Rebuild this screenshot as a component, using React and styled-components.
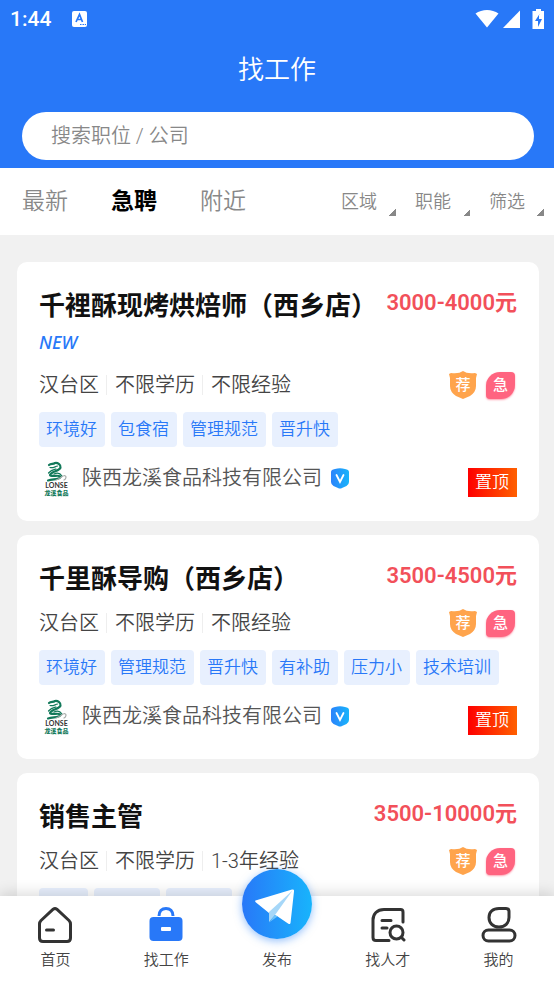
import React, { useState } from 'react';
import styled, { createGlobalStyle } from 'styled-components'

const jobs = [
    {
        id: 1,
        title: '千裡酥现烤烘焙师（西乡店）',
        salary: '3000-4000元',
        isNew: true,
        meta: ['汉台区', '不限学历', '不限经验'],
        tags: ['环境好', '包食宿', '管理规范', '晋升快'],
        company: '陕西龙溪食品科技有限公司',
    },
    {
        id: 2,
        title: '千里酥导购（西乡店）',
        salary: '3500-4500元',
        meta: ['汉台区', '不限学历', '不限经验'],
        tags: ['环境好', '管理规范', '晋升快', '有补助', '压力小', '技术培训'],
        company: '陕西龙溪食品科技有限公司',
    },
    {
        id: 3,
        title: '销售主管',
        salary: '3500-10000元',
        meta: ['汉台区', '不限学历', '1-3年经验'],
        tags: ['五险', '环境好', '晋升快'],
    },
]

const tabs = ['最新', '急聘', '附近']
const filters = ['区域', '职能', '筛选']

const StatusIcons = () => (
    <svg width="72" height="22" viewBox="0 0 72 22" fill="#fff" aria-hidden="true">
        <path d="M0.5 5.5C7 0.7 17 0.7 23.5 5.5L12 19.5Z" />
        <path d="M45 2.5V20H28Z" />
        <path fillRule="evenodd" d="M61 1h5v2h3v18H57.500V3H61ZM64.500 6L60 13h3v6l4-8h-3V6Z" />
    </svg>
)

const KeyboardIcon = () => (
    <svg width="15" height="16" viewBox="0 0 15 16" aria-hidden="true">
        <rect width="15" height="16" rx="2" fill="#fff" />
        <path d="M4 11L7.500 3.500L10.500 11M5.200 8.500H9.600" fill="none" stroke="#2878f8" strokeWidth="1.700" />
        <path d="M8 13.500h1.500m1 0H12m.8 0h1.200" stroke="#2878f8" strokeWidth="1.200" />
    </svg>
)

const CompanyLogo = () => (
    <svg width="34" height="36" viewBox="0 2 34 36" role="img" aria-label="LONSE">
        <g fill="none" strokeLinecap="round" strokeLinejoin="round">
            <path d="M10 6C12 4 14 5.500 16 4C19 3.500 22 6 21.500 8.500C21 12 12 12.500 11 16C12 18.500 21 15 21.500 18C21 20.500 14 20 9 21.500" stroke="#12795a" strokeWidth="2.200" />
            <path d="M11 8.500C14 9.500 16 7.500 18.500 7M9.500 14C12 11 15 10.500 17 10M15 15C18 13.500 21 14 23 17" stroke="#12795a" strokeWidth="1.200" />
            <path d="M17 21C20 20.500 23 17 25.500 16.500C28 17 27 20 25 21" stroke="#a9adab" strokeWidth="1.200" />
        </g>
        <text x="17.500" y="29" textAnchor="middle" fontFamily="Lato, sans-serif" fontSize="7" fontWeight="700" fill="#333">LONSE</text>
        <text x="17.500" y="36" textAnchor="middle" fontFamily="'Noto Sans CJK SC', sans-serif" fontSize="6" fontWeight="900" fill="#12795a">龙溪食品</text>
    </svg>
)

const VerifiedIcon = () => (
    <svg width="18" height="21" viewBox="0 0 18 21" role="img" aria-label="已认证">
        <defs>
            <linearGradient id="verified">
                <stop offset="0" stopColor="#2b83fb" />
                <stop offset="1" stopColor="#18b4fb" />
            </linearGradient>
        </defs>
        <path d="M4 1Q9-.5 14 1Q18 1.500 18 4V14Q18 16.500 15.500 18L11 20Q9 21 7 20L2.500 18Q0 16.500 0 14V4Q0 1.500 4 1Z" fill="url(#verified)" />
        <path d="M5.500 7L9 14L12.500 7" fill="none" stroke="#fff" strokeWidth="1.800" strokeLinecap="round" />
    </svg>
)

const ShieldShape = () => (
    <svg width="30" height="30" viewBox="0 0 30 30" aria-hidden="true">
        <path d="M15 1Q19 4 27 3L29 4L28 8V16Q28 22 22 26L15 29L8 26Q2 22 2 16V8L1 4L3 3Q11 4 15 1Z" fill="#ffa44c" />
    </svg>
)

const HomeIcon = () => (
    <svg width="36" height="38" viewBox="0 0 36 38" fill="none" stroke="#333" strokeWidth="3" strokeLinecap="round" strokeLinejoin="round">
        <path d="M16.200 3.200Q18 1.800 19.800 3.200L32 14.500Q33.500 16 33.500 18V32Q33.500 35.500 30 35.500H6Q2.500 35.500 2.500 32V18Q2.500 16 4 14.500Z" />
        <path d="M9.500 24h7" />
    </svg>
)

const WorkIcon = () => (
    <svg width="36" height="38" viewBox="0 0 36 38">
        <path d="M11 10C11 5 14 2.500 18 2.500S25 5 25 10" fill="none" stroke="#2878f8" strokeWidth="3" />
        <rect x="1.500" y="11" width="33" height="24" rx="4" fill="#2878f8" />
        <rect x="13" y="21" width="10" height="4" rx="1" fill="#fff" />
    </svg>
)

const PlaneIcon = () => (
    <svg width="44" height="40" viewBox="0 0 44 40">
        <path d="M0.500 16.500L37 5.500Q39.500 5 39 7.500L35.500 39Q35 41 33 39.500L22 32L14 29L1 18.500Q-.5 17 .5 16.500Z" fill="#fff" />
        <path d="M14 28L37.500 6.500L20 31L14 38Z" fill="#a6d7f8" />
        <path d="M20 31L22.500 32.500L14 38.500Z" fill="#6ec3f8" />
    </svg>
)

const TalentIcon = () => (
    <svg width="36" height="38" viewBox="0 0 36 38" fill="none" stroke="#333" strokeWidth="3" strokeLinecap="round" strokeLinejoin="round">
        <path d="M33 16V6Q33 3.500 30.500 3.500H14C7 3.500 3 8 3 14V31.500Q3 34.500 6 34.500H19" />
        <path d="M12 14.500h9M12 22h5M31.500 31.500L34 34" />
        <circle cx="26.500" cy="26.500" r="6.500" />
    </svg>
)

const MineIcon = () => (
    <svg width="36" height="38" viewBox="0 0 36 38" fill="none" stroke="#333" strokeWidth="3" strokeLinejoin="round">
        <path d="M18 2.500H25Q28 2.500 28 5.500V11.500C28 17 24 21 18 21S8 17 8 11.500S12 2.500 18 2.500Z" />
        <rect x="2" y="24" width="32" height="11" rx="5.500" />
    </svg>
)

const navItems = [
    { label: '首页', Icon: HomeIcon },
    { label: '找工作', Icon: WorkIcon },
    { label: '发布', Icon: PlaneIcon, main: true },
    { label: '找人才', Icon: TalentIcon },
    { label: '我的', Icon: MineIcon },
]

const JobCard = ({ job }) => (
    <Card>
        <TitleRow>
            <JobTitle>{job.title}</JobTitle>
            <Salary>{job.salary}</Salary>
        </TitleRow>
        {job.isNew && <NewMark>NEW</NewMark>}
        <MetaRow>
            {job.meta.map((item) => (
                <MetaItem key={item}>{item}</MetaItem>
            ))}
            <Badges>
                <Shield>
                    <ShieldShape />
                    <span>荐</span>
                </Shield>
                <Urgent>急</Urgent>
            </Badges>
        </MetaRow>
        <Tags>
            {job.tags.map((tag) => (
                <Tag key={tag}>{tag}</Tag>
            ))}
        </Tags>
        {job.company && (
            <CompanyRow>
                <CompanyLogo />
                <CompanyName>{job.company}</CompanyName>
                <VerifiedIcon />
                <TopMark>置顶</TopMark>
            </CompanyRow>
        )}
    </Card>
)

const App = () => {

    const [tab, setTab] = useState('急聘')
    const [keyword, setKeyword] = useState('')

    return (
        <Page>
            <GlobalStyle />
            <Header>
                <StatusBar>
                    <Time>1:44</Time>
                    <KeyboardIcon />
                    <Spacer />
                    <StatusIcons />
                </StatusBar>
                <PageTitle>找工作</PageTitle>
                <Search
                    type="search"
                    aria-label="搜索职位 / 公司"
                    placeholder="搜索职位 / 公司"
                    value={keyword}
                    onChange={e => setKeyword(e.target.value)} />
            </Header>
            <FilterBar>
                {tabs.map((name) => (
                    <Tab key={name} type="button" $active={name === tab} onClick={() => setTab(name)}>
                        {name}
                    </Tab>
                ))}
                <Spacer />
                <Filters>
                    {filters.map((name) => (
                        <Filter key={name}>
                            <FilterSelect aria-label={name}>
                                <option>{name}</option>
                            </FilterSelect>
                            <Corner />
                        </Filter>
                    ))}
                </Filters>
            </FilterBar>
            <List>
                {jobs.map((job) => (
                    <JobCard key={job.id} job={job} />
                ))}
            </List>
            <Nav>
                {navItems.map(({ label, Icon, main }) => (
                    <NavItem key={label} type="button">
                        {main ? <Publish><Icon /></Publish> : <Icon />}
                        <span>{label}</span>
                    </NavItem>
                ))}
            </Nav>
        </Page>
    );
};

const GlobalStyle = createGlobalStyle`
* {
box-sizing: border-box;
}
body {
margin: 0;
font-family: Roboto, "Noto Sans CJK SC", sans-serif;
font-weight: 350;
}
button, input, select {
font: inherit;
border: none;
background: none;
padding: 0;
}
`;

const Page = styled.div`
display: flex;
flex-direction: column;
height: 100vh;
background-color: #f1f1f1;
`;

const Header = styled.header`
flex: none;
display: flex;
flex-direction: column;
padding-bottom: 8px;
background-color: #2878f8;
color: #fff;
`;

const StatusBar = styled.div`
display: flex;
align-items: center;
gap: 21px;
height: 38px;
padding: 0 7px 0 10px;
`;

const Time = styled.span`
font-size: 21px;
font-weight: 500;
`;

const Spacer = styled.div`
flex: 1;
`;

const PageTitle = styled.h1`
margin: 12px 0 22px;
font-size: 26px;
font-weight: 350;
line-height: 40px;
text-align: center;
`;

const Search = styled.input`
height: 48px;
margin: 0 20px 0 22px;
padding: 0 29px;
border-radius: 24px;
background-color: #fff;
color: #333;
font-size: 20px;
appearance: none;
&::placeholder {
color: #888;
}
`;

const FilterBar = styled.div`
flex: none;
display: flex;
align-items: center;
gap: 43px;
height: 67px;
padding: 0 10px 0 22px;
background-color: #fff;
`;

const Tab = styled.button`
padding-bottom: 6px;
color: ${props => props.$active ? '#000' : '#888'};
font-size: 23px;
font-weight: ${props => props.$active ? 700 : 350};
cursor: pointer;
`;

const Filters = styled.div`
display: flex;
gap: 19px;
`;

const Filter = styled.label`
display: flex;
align-items: flex-end;
gap: 12px;
height: 28px;
`;

const FilterSelect = styled.select`
align-self: center;
appearance: none;
color: #888;
font-size: 18px;
`;

const Corner = styled.i`
width: 7px;
height: 7px;
background: linear-gradient(135deg, transparent 50%, #888 50%);
`;

const List = styled.main`
flex: 1;
min-height: 0;
overflow: hidden;
padding: 27px 15px 0 17px;
`;

const Card = styled.article`
margin-bottom: 14px;
padding: 25px 22px 24px;
border-radius: 10px;
background-color: #fff;
`;

const TitleRow = styled.div`
display: flex;
justify-content: space-between;
line-height: 38px;
white-space: nowrap;
`;

const JobTitle = styled.h2`
margin: 0;
color: #111;
font-size: 26px;
font-weight: 700;
`;

const Salary = styled.span`
color: #f2505a;
font-size: 22px;
font-weight: 600;
line-height: 32px;
`;

const NewMark = styled.div`
color: #2878f8;
font-family: "Noto Sans", sans-serif;
font-size: 18px;
font-style: italic;
font-weight: 500;
line-height: 35px;
`;

const MetaRow = styled.div`
display: flex;
align-items: center;
height: 30px;
margin-top: 10px;
color: #444;
font-size: 20px;
`;

const MetaItem = styled.span`
line-height: 20px;
& + & {
margin-left: 7px;
padding-left: 8px;
border-left: 1px solid #eee;
}
`;

const Badges = styled.div`
display: flex;
align-items: center;
gap: 8px;
margin-left: auto;
color: #fff;
font-size: 15px;
font-weight: 500;
line-height: 20px;
`;

const Shield = styled.span`
display: grid;
place-items: center;
& > * {
grid-area: 1 / 1;
}
`;

const Urgent = styled.span`
display: flex;
align-items: center;
justify-content: center;
width: 29px;
height: 27px;
margin-right: 2px;
border-radius: 14px 4px 14px 4px;
background-color: #ff6480;
box-shadow: 0 1px 2px #ffa0b0;
`;

const Tags = styled.div`
display: flex;
gap: 6px;
margin: 12px 0 13px;
`;

const Tag = styled.span`
padding: 0 8px 0 7px;
border-radius: 4px;
background-color: #e8f0fe;
color: #2878f8;
font-size: 17px;
line-height: 35px;
white-space: nowrap;
`;

const CompanyRow = styled.div`
display: flex;
align-items: center;
gap: 9px;
height: 37px;
`;

const CompanyName = styled.span`
color: #555;
font-size: 20px;
line-height: 37px;
`;

const TopMark = styled.span`
align-self: flex-end;
margin-left: auto;
padding: 0 8px 0 7px;
background: linear-gradient(90deg, #fe0000, #ff6000);
color: #fff;
font-size: 17px;
line-height: 29px;
`;

const Nav = styled.nav`
position: relative;
flex: none;
display: flex;
height: 88px;
background-color: #fff;
box-shadow: 0 -2px 14px rgba(0, 0, 0, 0.16);
`;

const NavItem = styled.button`
flex: 1;
display: flex;
flex-direction: column;
align-items: center;
justify-content: flex-end;
gap: 5px;
padding-bottom: 13px;
color: #444;
font-size: 15px;
line-height: 22px;
cursor: pointer;
`;

const Publish = styled.span`
flex: none;
display: flex;
align-items: center;
justify-content: center;
width: 70px;
height: 70px;
margin-bottom: 5px;
border-radius: 50%;
background: linear-gradient(90deg, #2878f8, #18b4fc);
box-shadow: 0 2px 8px rgba(40, 130, 250, 0.5);
`;

export default App;
